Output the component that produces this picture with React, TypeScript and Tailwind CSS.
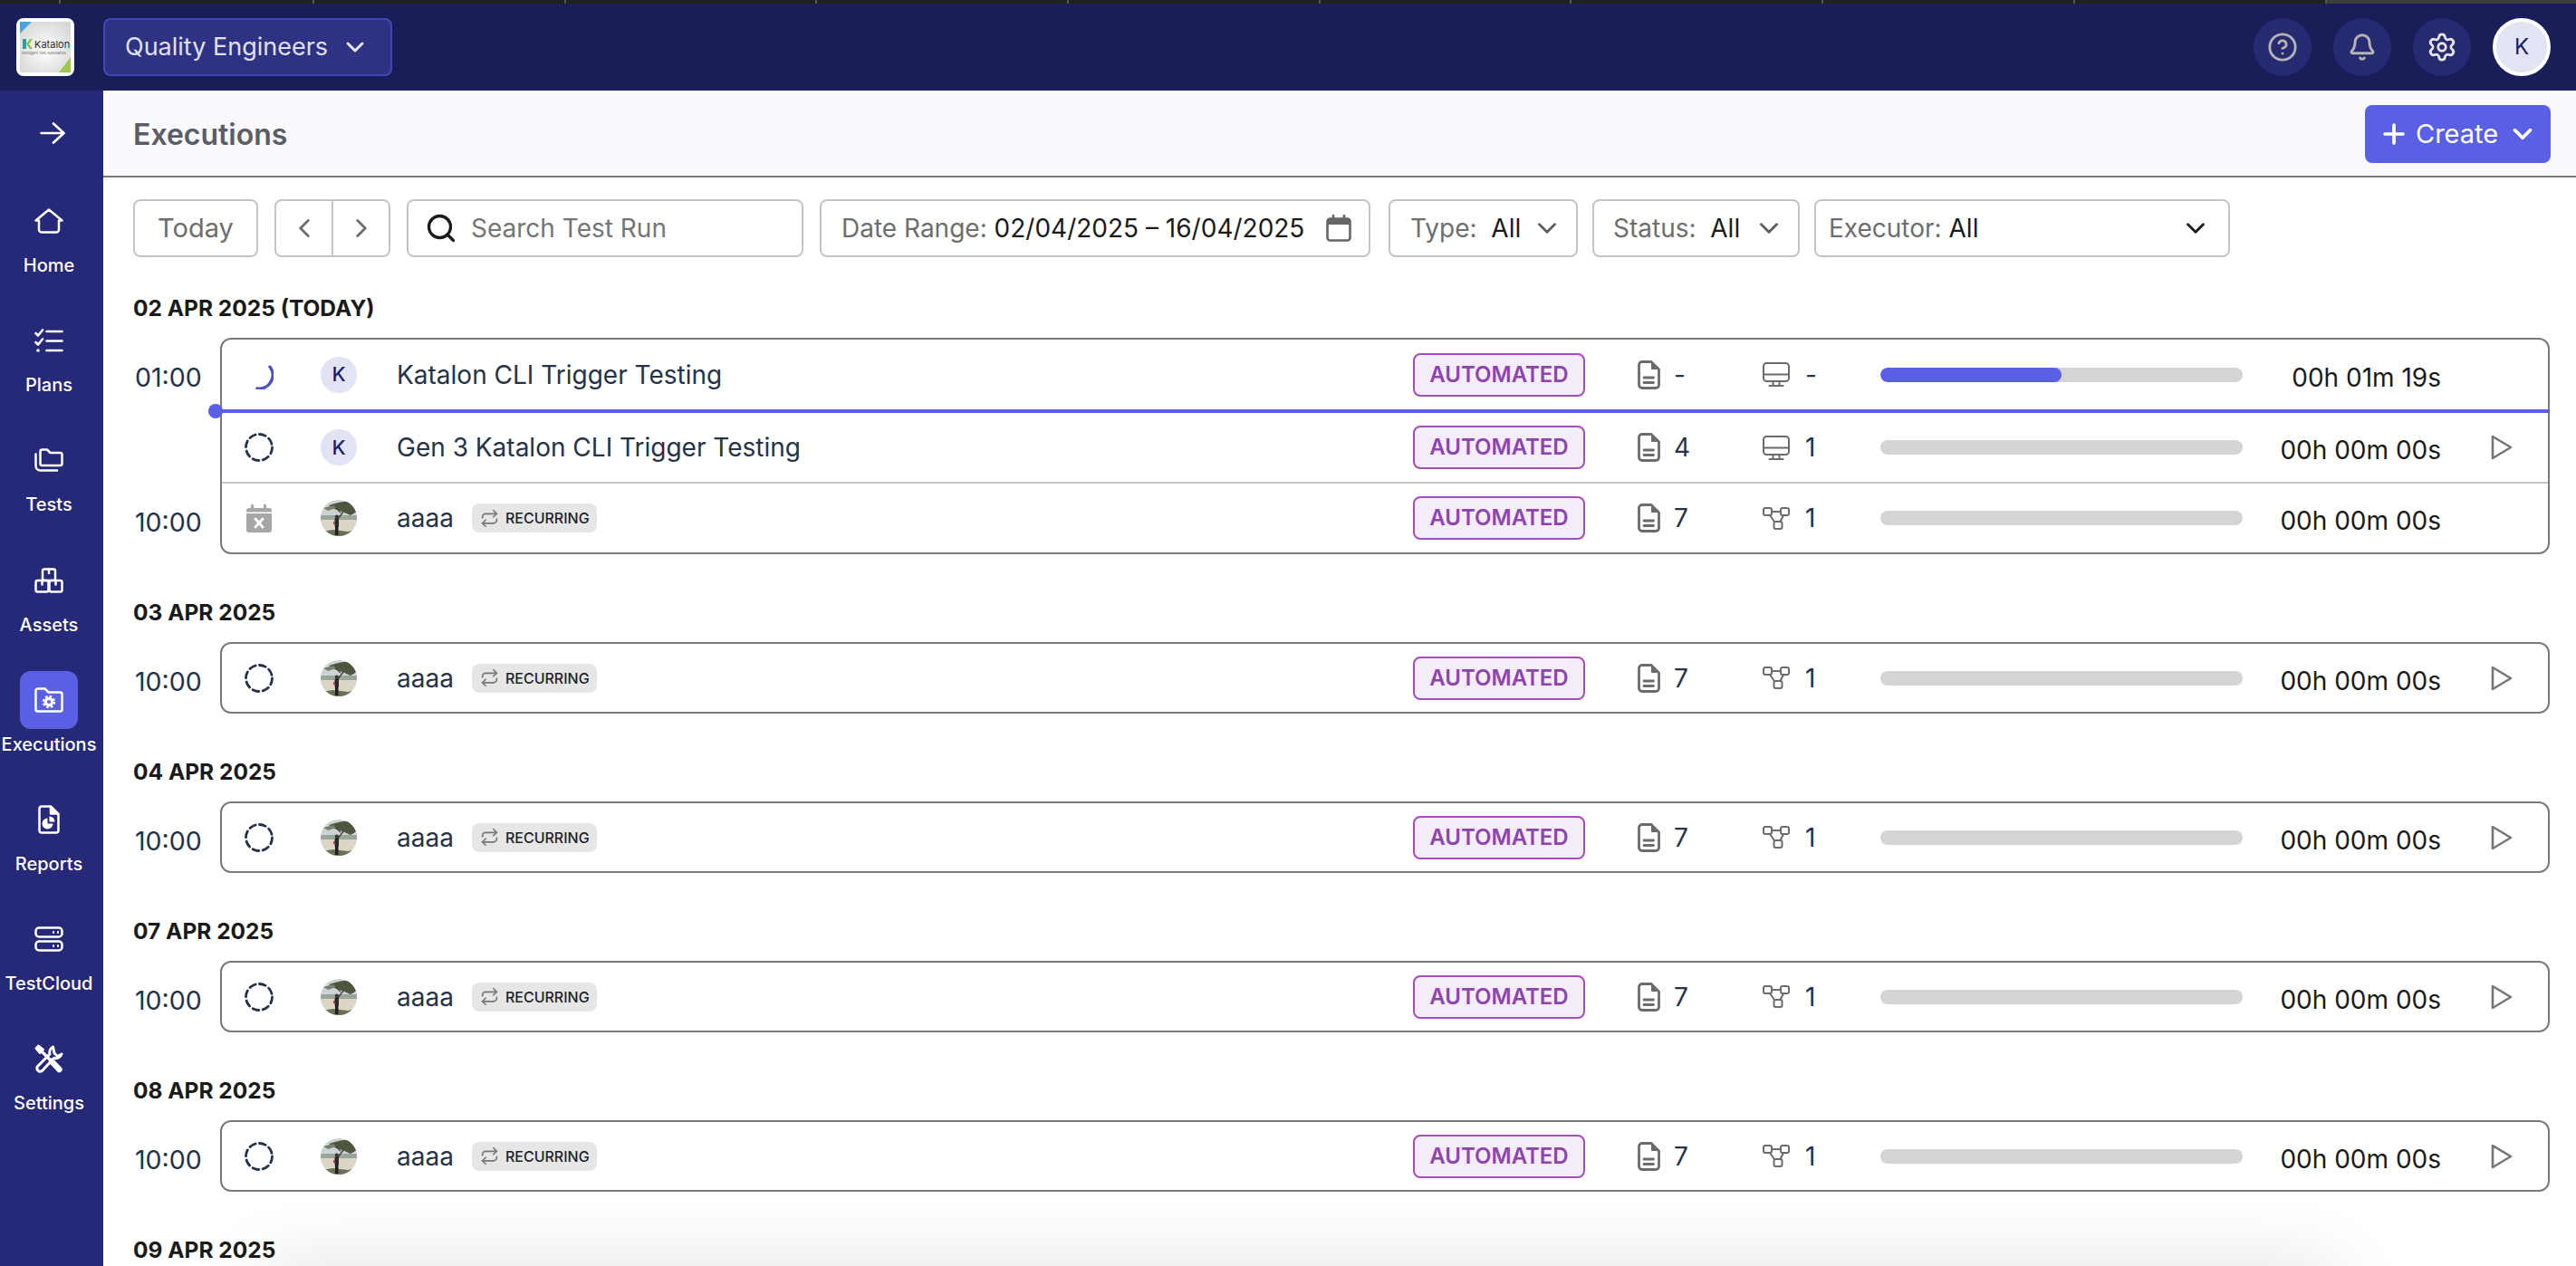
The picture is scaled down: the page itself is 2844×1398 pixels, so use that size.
import React from "react";
import { Bell, ChevronDown, ChevronLeft, ChevronRight, CircleHelp, Plus, Repeat, Search, Settings } from "lucide-react";

const navItems = [
  { label: "Home", icon: <HomeIcon /> },
  { label: "Plans", icon: <PlansIcon /> },
  { label: "Tests", icon: <TestsIcon /> },
  { label: "Assets", icon: <AssetsIcon /> },
  { label: "Executions", icon: <ExecutionsIcon />, active: true },
  { label: "Reports", icon: <ReportsIcon /> },
  { label: "TestCloud", icon: <CloudIcon /> },
  { label: "Settings", icon: <ToolsIcon /> },
];

function HomeIcon() {
  return (
    <svg width="32" height="28" viewBox="0 0 32 28" fill="none" stroke="white" strokeWidth="2.5" strokeLinejoin="round" strokeLinecap="round">
      <path d="M16 1.5 L30.5 13.5 H27 V23.5 a3 3 0 0 1 -3 3 H8 a3 3 0 0 1 -3 -3 V13.5 H1.5 Z" />
    </svg>
  );
}

function PlansIcon() {
  return (
    <svg width="32" height="26" viewBox="0 0 32 26" fill="none" stroke="white" strokeWidth="2.6" strokeLinejoin="round" strokeLinecap="round">
      <path d="M1.5 5 L4 7.5 L9 1.5" />
      <path d="M1.5 15 L4 17.5 L9 11.5" />
      <path d="M13.5 3 H30.5 M13.5 13.5 H30.5 M13.5 24 H30.5" />
      <circle cx="4" cy="24" r="1.8" fill="white" stroke="none" />
    </svg>
  );
}

function TestsIcon() {
  return (
    <svg width="32" height="26" viewBox="0 0 32 26" fill="none" stroke="white" strokeWidth="2.5" strokeLinejoin="round" strokeLinecap="round">
      <path d="M6.5 3.5 a2 2 0 0 1 2 -2 h5.5 l3.5 3.5 h11 a2 2 0 0 1 2 2 v10 a2 2 0 0 1 -2 2 h-20 a2 2 0 0 1 -2 -2 Z" />
      <path d="M1.5 6.5 V19.5 a5 5 0 0 0 5 5 H25" />
    </svg>
  );
}

function AssetsIcon() {
  return (
    <svg width="32" height="28" viewBox="0 0 32 28" fill="none" stroke="white" strokeWidth="2.5" strokeLinejoin="round" strokeLinecap="round">
      <rect x="9" y="1.5" width="14" height="12.5" rx="2" />
      <rect x="1.5" y="14" width="14" height="12.5" rx="2" />
      <rect x="16.5" y="14" width="14" height="12.5" rx="2" />
      <path d="M16 1.5 V6 M8.5 14 V18.5 M23.5 14 V18.5" />
    </svg>
  );
}

function ExecutionsIcon() {
  return (
    <svg width="32" height="28" viewBox="0 0 32 28" fill="none" stroke="white" strokeWidth="2.5" strokeLinejoin="round">
      <path d="M1.5 3.5 a2 2 0 0 1 2 -2 h8 l4 4 h13 a2 2 0 0 1 2 2 v17 a2 2 0 0 1 -2 2 h-25 a2 2 0 0 1 -2 -2 Z" />
      <circle cx="16" cy="16" r="3.6" stroke="white" strokeWidth="3.2" fill="none" />
      <circle cx="16" cy="16" r="6" stroke="white" strokeWidth="2.4" strokeDasharray="2.6 2.1" fill="none" />
    </svg>
  );
}

function ReportsIcon() {
  return (
    <svg width="24" height="32" viewBox="0 0 24 32" fill="none" stroke="white" strokeWidth="2.5" strokeLinejoin="round">
      <path d="M4 1.5 H14 L22.5 10 V28 a2.5 2.5 0 0 1 -2.5 2.5 H4 a2.5 2.5 0 0 1 -2.5 -2.5 V4 a2.5 2.5 0 0 1 2.5 -2.5 Z" />
      <path d="M14 2 V9.5 H22" fill="white" />
      <path d="M10.5 14.5 a6 6 0 1 0 6 6 h-6 Z" fill="white" stroke="none" />
      <path d="M12.5 12.5 a6 6 0 0 1 6 6 h-6 Z" fill="white" stroke="none" />
    </svg>
  );
}

function CloudIcon() {
  return (
    <svg width="32" height="28" viewBox="0 0 32 28" fill="none" stroke="white" strokeWidth="2.5">
      <rect x="1.5" y="1.5" width="29" height="10" rx="3.5" />
      <rect x="1.5" y="16.5" width="29" height="10" rx="3.5" />
      <path d="M20 6.5 h2 M25 6.5 h2 M20 21.5 h2 M25 21.5 h2" />
    </svg>
  );
}

function ToolsIcon() {
  return (
    <svg width="32" height="32" viewBox="0 0 32 32" fill="none" stroke="white" strokeLinecap="round" strokeLinejoin="round">
      <path d="M4.5 1.5 L1.5 4.5 L6 10 L10 6 Z" fill="white" strokeWidth="2" />
      <path d="M7 7 L17 17" strokeWidth="3.4" />
      <path d="M19 19 L27.5 28" strokeWidth="6.4" />
      <path d="M20.5 3 a7 7 0 0 0 -3.5 8 L3.5 24.5 a3.6 3.6 0 0 0 5 5 L21.5 15.5 a7 7 0 0 0 8.5 -4.5 l-4.5 2.5 l-3.5 -3.5 Z" strokeWidth="3" />
    </svg>
  );
}

function Logo() {
  return (
    <svg width="64" height="64" viewBox="0 0 64 64" className="shrink-0">
      <defs>
        <radialGradient id="logoBg" cx="50%" cy="55%" r="65%">
          <stop offset="0%" stopColor="#ffffff" />
          <stop offset="100%" stopColor="#d6d6d6" />
        </radialGradient>
      </defs>
      <rect width="64" height="64" rx="8" fill="white" />
      <rect x="4" y="4" width="56" height="56" rx="2" fill="url(#logoBg)" />
      <path d="M4 4 H17 L4 17 Z" fill="#4aa3df" />
      <path d="M60 60 H47 L60 43 Z" fill="#9cc94a" />
      <path d="M7 23 H11 V34 H7 Z" fill="#2a9fa8" />
      <path d="M11 28.5 L15 23 H18 L14 28.5 L18 34 H15 Z" fill="#86c440" />
      <text x="20" y="33" fontSize="11" fontFamily="Inter, sans-serif" fill="#2b2b2b">Katalon</text>
      <text x="6" y="40" fontSize="3.9" fontFamily="Inter, sans-serif" fill="#666666">Intelligent Test Automation</text>
    </svg>
  );
}

function TreeAvatar() {
  return (
    <svg width="40" height="40" viewBox="0 0 40 40" className="shrink-0 rounded-full">
      <rect width="40" height="40" fill="#ccd3d6" />
      <rect y="17" width="40" height="6" fill="#9aa59c" />
      <rect y="22" width="40" height="18" fill="#dcd6c6" />
      <path d="M0 35 L14 33 L30 35 L40 33 V40 H0 Z" fill="#6a6f58" />
      <path d="M9 6 C17 4 24 1 30 2 L38 6 L40 13 L33 17 L24 13 L15 10 Z" fill="#4c573e" />
      <path d="M3 9 L14 6 L17 9 L8 12 Z" fill="#7a7f6c" />
      <path d="M25 13 L19 21 M17 9 L22 14" stroke="#4a4038" strokeWidth="1.4" fill="none" />
      <rect x="15.5" y="20" width="4.5" height="10" rx="1.5" fill="#2a2a2a" />
      <rect x="16" y="29" width="3.5" height="10" fill="#1f1f1f" />
      <circle cx="17.8" cy="18.5" r="2" fill="#3a2f2a" />
      <rect x="14" y="24" width="1.6" height="3" fill="#b0443a" />
    </svg>
  );
}

function DashedCircle() {
  return (
    <svg width="32" height="32" viewBox="0 0 32 32" fill="none">
      <circle cx="16" cy="16" r="14.5" stroke="#263248" strokeWidth="2.8" strokeDasharray="7 4.39" strokeLinecap="round" />
    </svg>
  );
}

function SpinnerArc() {
  return (
    <svg width="32" height="32" viewBox="0 0 32 32" fill="none">
      <path d="M28 7 A15 15 0 0 1 14 31" stroke="#4c51c6" strokeWidth="3.4" strokeLinecap="round" />
    </svg>
  );
}

function CancelledIcon() {
  return (
    <svg width="32" height="32" viewBox="0 0 32 32">
      <path d="M7 1 a1.5 1.5 0 0 1 3 0 V4 H21 V1 a1.5 1.5 0 0 1 3 0 V4 H27 a3 3 0 0 1 3 3 V8.5 H2 V7 a3 3 0 0 1 3 -3 H7 Z" fill="#a6a6a6" transform="translate(0 1)" />
      <path d="M2 11 H30 V29 a3 3 0 0 1 -3 3 H5 a3 3 0 0 1 -3 -3 Z" fill="#a6a6a6" />
      <path d="M12 17 L20 26 M20 17 L12 26" stroke="white" strokeWidth="2.8" strokeLinecap="round" />
    </svg>
  );
}

function DocIcon() {
  return (
    <svg width="25" height="32" viewBox="0 0 25 32" fill="none" stroke="#6b6b6b" strokeWidth="2.8" strokeLinejoin="round" strokeLinecap="round" className="shrink-0">
      <path d="M5 1.5 H15 L23.5 10 V27 a3.5 3.5 0 0 1 -3.5 3.5 H5 a3.5 3.5 0 0 1 -3.5 -3.5 V5 a3.5 3.5 0 0 1 3.5 -3.5 Z" />
      <path d="M15.5 2 V9.5 H23 Z" fill="#6b6b6b" strokeWidth="1" />
      <path d="M7 19 H17.5 M7 24.5 H17.5" />
    </svg>
  );
}

function MonitorIcon() {
  return (
    <svg width="30" height="27" viewBox="0 0 30 27" fill="none" stroke="#6b6b6b" strokeWidth="2" strokeLinejoin="round" strokeLinecap="round" className="shrink-0">
      <rect x="1" y="1" width="28" height="20" rx="3.5" />
      <path d="M1 13.5 H29" />
      <path d="M11.5 21 V25.5 M18.5 21 V25.5 M7.5 26 H22.5" />
    </svg>
  );
}

function NodesIcon() {
  return (
    <svg width="30" height="25" viewBox="0 0 30 25" fill="none" stroke="#6b6b6b" strokeWidth="2" strokeLinejoin="round" className="shrink-0">
      <rect x="1" y="1" width="9" height="8" rx="2" />
      <rect x="20" y="1" width="9" height="8" rx="2" />
      <rect x="12.5" y="16" width="9" height="8" rx="2" />
      <path d="M10 5 H20 M8 9 L13 16 M23 9 L19.5 16" />
    </svg>
  );
}

function PlayIcon() {
  return (
    <svg width="24" height="28" viewBox="0 0 24 28" fill="none" stroke="#777777" strokeWidth="2.6" strokeLinejoin="round">
      <path d="M2 2 L22 14 L2 26 Z" />
    </svg>
  );
}

function CalendarIcon() {
  return (
    <svg width="28" height="30" viewBox="0 0 28 30" fill="none" className="shrink-0">
      <rect x="1.5" y="4.5" width="25" height="24" rx="3" stroke="#666666" strokeWidth="2.6" />
      <path d="M2 6 a2 2 0 0 1 2 -2 H24 a2 2 0 0 1 2 2 V11 H2 Z" fill="#666666" />
      <path d="M8 1 V5 M20 1 V5" stroke="#666666" strokeWidth="2.6" strokeLinecap="round" />
    </svg>
  );
}

function Avatar({ tree }: { tree?: boolean }) {
  if (tree) return <TreeAvatar />;
  return (
    <div className="flex h-10 w-10 shrink-0 items-center justify-center rounded-full bg-[#e2e4f4] text-[22px] font-medium text-[#1a2070]">
      K
    </div>
  );
}

type RowData = {
  status: "running" | "queued" | "cancelled";
  tree?: boolean;
  name: string;
  recurring?: boolean;
  cases: string;
  target: "monitor" | "nodes";
  agents: string;
  duration: string;
  progress: number;
  play?: boolean;
};

const recurringRow: RowData = {
  status: "queued",
  tree: true,
  name: "aaaa",
  recurring: true,
  cases: "7",
  target: "nodes",
  agents: "1",
  duration: "00h 00m 00s",
  progress: 0,
  play: true,
};

const days: { title: string; times: string[]; rows: RowData[] }[] = [
  {
    title: "02 APR 2025 (TODAY)",
    times: ["01:00", "", "10:00"],
    rows: [
      { status: "running", name: "Katalon CLI Trigger Testing", cases: "-", target: "monitor", agents: "-", duration: "00h 01m 19s", progress: 50 },
      { status: "queued", name: "Gen 3 Katalon CLI Trigger Testing", cases: "4", target: "monitor", agents: "1", duration: "00h 00m 00s", progress: 0, play: true },
      { ...recurringRow, status: "cancelled", play: false },
    ],
  },
  { title: "03 APR 2025", times: ["10:00"], rows: [recurringRow] },
  { title: "04 APR 2025", times: ["10:00"], rows: [recurringRow] },
  { title: "07 APR 2025", times: ["10:00"], rows: [recurringRow] },
  { title: "08 APR 2025", times: ["10:00"], rows: [recurringRow] },
];

function Row({ row }: { row: RowData }) {
  return (
    <div className="flex h-full items-center pr-[39px] pl-[25px]">
      <div className="flex w-8 shrink-0 justify-center">
        {row.status === "running" && <SpinnerArc />}
        {row.status === "queued" && <DashedCircle />}
        {row.status === "cancelled" && <CancelledIcon />}
      </div>
      <div className="ml-[52px]">
        <Avatar tree={row.tree} />
      </div>
      <div className="ml-[44px] flex min-w-0 flex-1 items-center gap-5">
        <span className="text-[28px] text-[#263248]">{row.name}</span>
        {row.recurring && (
          <span className="flex h-8 items-center gap-[7px] rounded-lg bg-[#e6e6e6] pr-[8px] pl-[9px] text-[16px] font-medium text-[#1f1f1f]">
            <Repeat size={21} color="#777777" strokeWidth={2} />
            RECURRING
          </span>
        )}
      </div>
      <div className="flex h-12 w-[190px] shrink-0 items-center justify-center rounded-lg border-2 border-[#a24fb8] bg-[#f4edf9] text-[24px] font-semibold text-[#8e44ad]">
        AUTOMATED
      </div>
      <div className="ml-[58px] flex w-[138px] shrink-0 items-center gap-[15px] text-[28px] text-[#263248]">
        <DocIcon />
        <span>{row.cases}</span>
      </div>
      <div className="flex w-[130px] shrink-0 items-center gap-[17px] text-[28px] text-[#263248]">
        {row.target === "monitor" ? <MonitorIcon /> : <NodesIcon />}
        <span>{row.agents}</span>
      </div>
      <div className="h-4 w-[400px] shrink-0 overflow-hidden rounded-full bg-[#d4d4d4]">
        <div className="h-full rounded-full bg-[#5a60e3]" style={{ width: `${row.progress}%` }} />
      </div>
      <div className="w-[219px] shrink-0 pt-[6px] text-right text-[28px] text-[#1a1a1a]">{row.duration}</div>
      <div className="ml-[55px] flex w-6 shrink-0 justify-center">{row.play && <PlayIcon />}</div>
    </div>
  );
}

function timeCellClass(multi: boolean, i: number) {
  if (!multi) return "h-[75px] pt-[10px]";
  if (i === 0) return "h-[81px] pt-[4px]";
  if (i === 1) return "h-[78px] pt-[6px]";
  return "h-[76px] pt-[10px]";
}

function DayBlock({ day }: { day: (typeof days)[number] }) {
  const multi = day.rows.length > 1;
  return (
    <section className="mb-[49px]">
      <h2 className="mb-[18px] h-[30px] text-[24.5px] leading-[30px] font-bold text-[#1a1a1a]">{day.title}</h2>
      <div className="flex">
        <div className="flex w-[96px] shrink-0 flex-col pt-[2px] text-[28.5px] text-[#263248]">
          {day.times.map((t, i) => (
            <div key={i} className={`flex items-center pl-[2px] ${timeCellClass(multi, i)}`}>
              {t}
            </div>
          ))}
        </div>
        <div className="flex-1 rounded-xl border-2 border-[#7a7a7a]">
          {multi ? (
            <>
              <div className="h-[77px]">
                <Row row={day.rows[0]} />
              </div>
              <div className="relative -mx-[2px] h-1 bg-[#5a60e3]">
                <div className="absolute top-[-6px] left-[-13px] h-4 w-4 rounded-full bg-[#5a60e3]" />
              </div>
              <div className="h-[76px]">
                <Row row={day.rows[1]} />
              </div>
              <div className="h-[2px] bg-[#c4c4c4]" />
              <div className="h-[76px]">
                <Row row={day.rows[2]} />
              </div>
            </>
          ) : (
            <div className="h-[75px]">
              <Row row={day.rows[0]} />
            </div>
          )}
        </div>
      </div>
    </section>
  );
}

function Select({ label, value, box, dark }: { label: string; value: string; box: string; dark?: boolean }) {
  return (
    <div className={`flex h-16 shrink-0 items-center justify-between rounded-lg border-2 border-[#c4c4c4] ${box}`}>
      <span className="text-[28px] whitespace-pre text-[#6e6e6e]">
        {label}
        <span className="text-[#1a1a1a]"> {value}</span>
      </span>
      <ChevronDown size={34} strokeWidth={2} color={dark ? "#1a1a1a" : "#5e5e5e"} />
    </div>
  );
}

export default function App() {
  const tabs = Array.from({ length: 8 });
  return (
    <div className="flex h-[1398px] w-[2844px] flex-col overflow-hidden bg-white font-['Inter',sans-serif]">
      <div className="flex h-1 shrink-0 bg-[#1f211f]">
        <div className="w-[65px]" />
        <div className="w-[280px] border-l-2 border-[#555555]" />
        {tabs.map((_, i) => (
          <div key={i} className="w-[277.7px] border-l-2 border-[#555555]" />
        ))}
        <div className="flex-1 border-l-2 border-[#555555] bg-[#3d3d3d]" />
      </div>

      <header className="flex h-24 shrink-0 items-center bg-[#1a1e58] pr-[28px] pl-[18px]">
        <Logo />
        <button className="ml-8 flex h-16 w-[319px] items-center gap-[14px] rounded-lg border-2 border-[#4048b8] bg-[#2f3282] pl-[22px] text-[27px] text-[#dfe1f5]">
          Quality Engineers
          <ChevronDown size={32} strokeWidth={2.2} color="#e6e7f7" />
        </button>
        <div className="ml-auto flex items-center gap-6">
          <div className="flex h-16 w-16 items-center justify-center rounded-full bg-[#262a70]">
            <CircleHelp size={34} color="#b4b4b4" strokeWidth={2} />
          </div>
          <div className="flex h-16 w-16 items-center justify-center rounded-full bg-[#262a70]">
            <Bell size={32} color="#b4b4b4" strokeWidth={2.2} />
          </div>
          <div className="flex h-16 w-16 items-center justify-center rounded-full bg-[#262a70]">
            <Settings size={34} color="#e4e4e4" strokeWidth={2} />
          </div>
          <div className="flex h-16 w-16 items-center justify-center rounded-full border-4 border-white bg-[#e2e4f4] text-[24px] text-[#1a2070]">
            K
          </div>
        </div>
      </header>

      <div className="flex min-h-0 flex-1">
        <aside className="w-[114px] shrink-0 bg-[#262878] text-white">
          <div className="flex h-[94px] items-center pl-[44px]">
            <svg width="28" height="24" viewBox="0 0 28 24" fill="none" stroke="white" strokeWidth="2.6" strokeLinecap="round" strokeLinejoin="round">
              <path d="M1.5 12 H26 M15 1.5 L26.5 12 L15 22.5" />
            </svg>
          </div>
          <nav className="mt-[18px] flex w-[108px] flex-col">
            {navItems.map((item) => (
              <div key={item.label} className="flex h-[132.2px] flex-col items-center">
                <div className={`flex h-16 w-16 items-center justify-center rounded-xl ${item.active ? "bg-[#5a60e3]" : ""}`}>
                  {item.icon}
                </div>
                <span className="mt-1 text-[20px] leading-[26px] font-medium whitespace-nowrap">{item.label}</span>
              </div>
            ))}
          </nav>
        </aside>

        <main className="relative min-w-0 flex-1 overflow-hidden">
          <div className="flex h-[96px] items-center justify-between border-b-2 border-[#7a7a7a] bg-[#f9f9fe] pt-[2px] pr-[28px] pl-[33px]">
            <h1 className="mt-[2px] text-[32px] font-semibold text-[#5c5c66]">Executions</h1>
            <button className="flex h-16 w-[205px] items-center rounded-lg bg-[#5a60e3] pl-[15px] text-[29px] text-white">
              <Plus size={34} strokeWidth={2.6} color="white" />
              <span className="ml-[7px]">Create</span>
              <ChevronDown size={34} strokeWidth={2.6} color="white" className="ml-[10px]" />
            </button>
          </div>

          <div className="pt-6 pr-[29px] pl-[33px]">
            <div className="flex items-center">
              <button className="flex h-16 w-[138px] shrink-0 items-center justify-center rounded-lg border-2 border-[#c4c4c4] text-[29px] text-[#6e6e6e]">
                Today
              </button>
              <div className="ml-[18px] flex h-16 w-[128px] shrink-0 items-center rounded-lg border-2 border-[#c4c4c4]">
                <div className="flex h-full flex-1 items-center justify-center border-r-2 border-[#c4c4c4]">
                  <ChevronLeft size={34} strokeWidth={2} color="#6e6e6e" />
                </div>
                <div className="flex h-full flex-1 items-center justify-center">
                  <ChevronRight size={34} strokeWidth={2} color="#6e6e6e" />
                </div>
              </div>
              <div className="ml-[18px] flex h-16 w-[438px] shrink-0 items-center rounded-lg border-2 border-[#c4c4c4] pl-[18px]">
                <Search size={36} strokeWidth={2.2} color="#1a1a1a" />
                <span className="ml-[15px] text-[28px] text-[#757575]">Search Test Run</span>
              </div>
              <div className="ml-[18px] flex h-16 w-[608px] shrink-0 items-center justify-between rounded-lg border-2 border-[#c4c4c4] pr-[19px] pl-[22px]">
                <span className="text-[28px] whitespace-pre text-[#6e6e6e]">
                  Date Range: <span className="text-[#1a1a1a]">02/04/2025 – 16/04/2025</span>
                </span>
                <CalendarIcon />
              </div>
              <div className="ml-5">
                <Select label="Type:" value=" All" box="w-[209px] pr-[15px] pl-[22px]" />
              </div>
              <div className="ml-4">
                <Select label="Status:" value=" All" box="w-[229px] pr-[15px] pl-[21px]" />
              </div>
              <div className="ml-4">
                <Select label="Executor:" value="All" box="w-[459px] pr-[19px] pl-[14px]" dark />
              </div>
            </div>

            <div className="mt-[41px]">
              {days.map((day) => (
                <DayBlock key={day.title} day={day} />
              ))}
              <h2 className="h-[30px] text-[24.5px] leading-[30px] font-bold text-[#1a1a1a]">09 APR 2025</h2>
            </div>
          </div>

          <div className="absolute right-[260px] bottom-[-60px] left-[170px] h-[60px] rounded-full shadow-[0_0_80px_rgba(0,0,0,0.13)]" />
        </main>
      </div>
    </div>
  );
}
